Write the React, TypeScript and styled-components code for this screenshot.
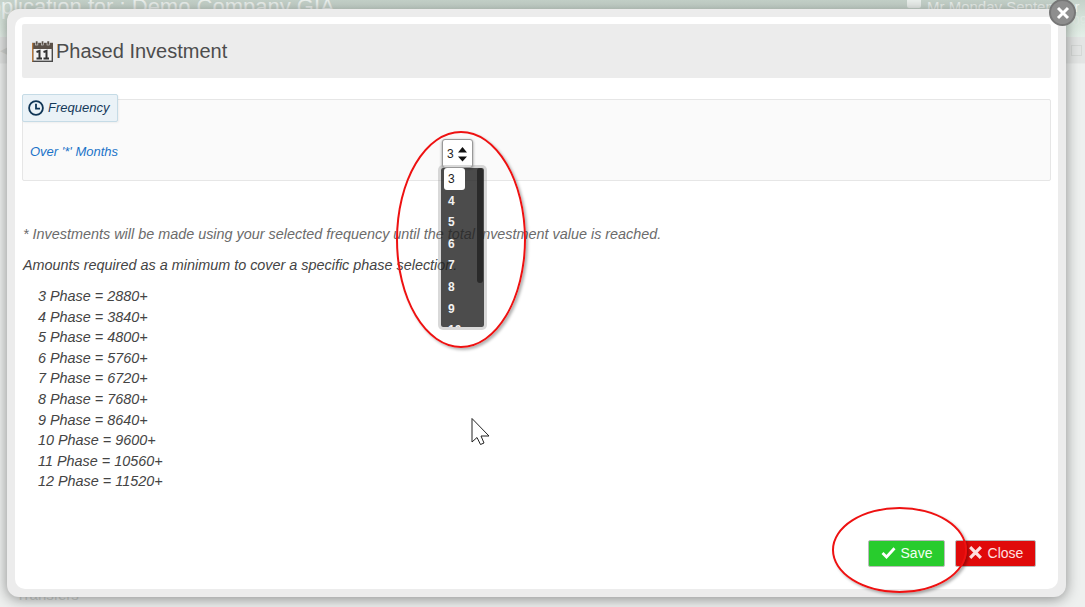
import React from 'react';
import styled, { createGlobalStyle } from 'styled-components';

const GlobalStyle = createGlobalStyle`
  html, body {
    margin: 0;
    padding: 0;
    height: 100%;
    overflow: hidden;
    background: #e9ebea;
    font-family: "Liberation Sans", Arial, sans-serif;
  }
`;

const Page = styled.div`
  position: relative;
  width: 1085px;
  height: 607px;
  overflow: hidden;
  background: #eef0ef;
`;

const PageHeader = styled.div`
  display: flex;
  justify-content: space-between;
  height: 37px;
  background: linear-gradient(180deg, #c5d2ca 0%, #dbe8df 70%, #e4efe8 100%);
  color: #edf2ef;
  overflow: hidden;
  white-space: nowrap;
`;

const PageTitle = styled.div`
  font-size: 22px;
  line-height: 14px;
  margin-left: -26px;
`;

const PageUser = styled.div`
  display: flex;
  flex-direction: column;
  width: 178px;
  flex: none;
  overflow: hidden;
`;

const UserLine = styled.div`
  display: flex;
  align-items: flex-start;
  gap: 6px;
  font-size: 15px;
  line-height: 14px;
`;

const UserDate = styled.div`
  align-self: flex-end;
  margin-right: -2px;
  color: #dfe8e2;
  font-size: 13px;
  line-height: 14px;
`;

const UserIcon = styled.div`
  width: 14px;
  height: 8px;
  flex: none;
  background: #edf2ef;
  border-radius: 0 0 2px 2px;
`;

const PageBar = styled.div`
  display: flex;
  align-items: center;
  justify-content: space-between;
  box-sizing: border-box;
  height: 27px;
  padding-right: 3px;
  background: #e3e5e4;
  border-bottom: 1px solid #e9ebea;
  color: #d2d5d3;
  font-size: 11px;
`;

const BarSquare = styled.div`
  width: 9px;
  height: 9px;
  border: 1px solid #d5d8d6;
`;

const PageFooter = styled.div`
  position: absolute;
  left: 16px;
  bottom: 4px;
  font-size: 15px;
  color: #cfd3d1;
`;

const Modal = styled.div`
  position: absolute;
  left: 7px;
  top: 9px;
  width: 1043px;
  height: 572px;
  padding: 8px;
  background: #ececec;
  border-radius: 12px;
  box-shadow: 0 2px 14px rgba(0, 0, 0, 0.42);
`;

const ModalBody = styled.div`
  display: flex;
  flex-direction: column;
  height: 100%;
  box-sizing: border-box;
  padding: 7px;
  background: #fff;
  border-radius: 10px;
`;

const CloseBadge = styled.button`
  position: absolute;
  right: -10px;
  top: -10px;
  display: flex;
  align-items: center;
  justify-content: center;
  width: 27px;
  height: 27px;
  padding: 0;
  border: 2px solid #777;
  border-radius: 50%;
  background: #8e8e8e;
`;

const HeaderBar = styled.div`
  display: flex;
  align-items: center;
  gap: 3px;
  height: 54px;
  flex: none;
  padding-left: 10px;
  background: #ececec;
  border-radius: 2px;
  color: #4d4d4d;
  font-size: 20px;
`;

const FrequencySet = styled.div`
  position: relative;
  box-sizing: border-box;
  height: 82px;
  margin-top: 21px;
  flex: none;
  display: flex;
  align-items: center;
  padding: 22px 7px 0;
  background: #fafafa;
  border: 1px solid #e6e6e6;
  border-radius: 2px;
`;

const Legend = styled.div`
  position: absolute;
  left: -1px;
  top: -6px;
  display: flex;
  align-items: center;
  gap: 4px;
  box-sizing: border-box;
  width: 96px;
  height: 28px;
  padding: 0 0 1px 5px;
  background: #eaf2f7;
  border: 1px solid #c5dbe6;
  border-radius: 2px;
  box-shadow: 1px 1px 2px rgba(0, 0, 0, 0.05);
  color: #14395a;
  font-size: 13px;
  font-style: italic;
`;

const OverLabel = styled.div`
  width: 412px;
  color: #1a73c8;
  font-size: 13px;
  font-style: italic;
`;

const SelectWrap = styled.div`
  position: relative;
  margin-top: 5px;
`;

const Spinner = styled.div`
  position: relative;
  z-index: 1;
  display: flex;
  align-items: center;
  gap: 3px;
  box-sizing: border-box;
  width: 31px;
  height: 29px;
  padding-left: 4px;
  background: #fff;
  border: 1px solid #999;
  border-radius: 3px;
  box-shadow: 0 1px 3px rgba(0, 0, 0, 0.45);
  color: #222;
  font-size: 12px;
`;

const Arrows = styled.svg`
  width: 11px;
  height: 20px;
`;

const OptionList = styled.div`
  position: absolute;
  left: -4px;
  top: 26px;
  z-index: 2;
  box-sizing: border-box;
  width: 49px;
  height: 165px;
  padding: 0 3px;
  overflow: hidden;
  background: rgba(34, 34, 34, 0.81);
  background-clip: padding-box;
  border: 3px solid rgba(150, 150, 150, 0.36);
  border-radius: 5px;
`;

const Option = styled.div<{ $selected?: boolean }>`
  box-sizing: border-box;
  width: 21px;
  height: 21.6px;
  padding-left: 4px;
  line-height: 23px;
  font-size: 12px;
  font-weight: ${(p) => (p.$selected ? 'normal' : 'bold')};
  color: ${(p) => (p.$selected ? '#222' : '#f2f2f2')};
  background: ${(p) => (p.$selected ? '#fff' : 'transparent')};
  border-radius: 3px;
`;

const ScrollThumb = styled.div`
  position: absolute;
  right: 1px;
  top: 0;
  width: 6px;
  height: 115px;
  background: #2a2a2a;
  border-radius: 3px;
`;

const Note = styled.p`
  margin: 45px 0 0 1px;
  color: #6b6b6b;
  font-size: 14.4px;
  font-style: italic;
  line-height: 16px;
`;

const Required = styled.p`
  margin: 15px 0 0 1px;
  color: #444;
  font-size: 14.4px;
  font-style: italic;
  line-height: 16px;
`;

const PhaseList = styled.div`
  margin: 13px 0 0 16px;
  color: #444;
  font-size: 14.4px;
  font-style: italic;
  line-height: 20.6px;
`;

const Footer = styled.div`
  display: flex;
  justify-content: flex-end;
  gap: 10px;
  margin-top: auto;
  padding: 0 15px 15px 0;
`;

const ActionButton = styled.button<{ $tone: 'save' | 'close' }>`
  display: flex;
  align-items: center;
  justify-content: center;
  gap: 5px;
  box-sizing: border-box;
  width: ${(p) => (p.$tone === 'save' ? '77px' : '81px')};
  height: 27px;
  padding: 0 0 2px;
  border: 1px solid #bbb;
  border-radius: 2px;
  background: ${(p) => (p.$tone === 'save' ? '#28cc2d' : '#e00a0a')};
  color: ${(p) => (p.$tone === 'save' ? '#f2fff2' : '#fde0e0')};
  font-family: "Liberation Sans", Arial, sans-serif;
  font-size: 14px;
`;

const Annotation = styled.div<{ $x: number; $y: number; $w: number; $h: number }>`
  position: absolute;
  left: ${(p) => p.$x}px;
  top: ${(p) => p.$y}px;
  box-sizing: border-box;
  width: ${(p) => p.$w}px;
  height: ${(p) => p.$h}px;
  border: 2px solid #ee1111;
  border-radius: 50%;
  box-shadow: 2px 2px 3px rgba(0, 0, 0, 0.3);
  pointer-events: none;
`;

const Cursor = styled.svg`
  position: absolute;
  left: 470px;
  top: 417px;
  width: 20px;
  height: 30px;
`;

const phases = [
  ['3', '2880'],
  ['4', '3840'],
  ['5', '4800'],
  ['6', '5760'],
  ['7', '6720'],
  ['8', '7680'],
  ['9', '8640'],
  ['10', '9600'],
  ['11', '10560'],
  ['12', '11520'],
];

const options = ['3', '4', '5', '6', '7', '8', '9', '10'];

const CalendarIcon = () => (
  <svg width="21" height="21" viewBox="0 0 21 21">
    <rect x="0.7" y="2.5" width="19.6" height="17.8" fill="#f4f4f4" stroke="#4a4a4a" strokeWidth="1.4" />
    <rect x="0" y="2" width="21" height="6" fill="#5a5048" />
    <rect x="0" y="2" width="1.2" height="18.6" fill="#b9783a" />
    <rect x="3.5" y="0" width="2.4" height="4" fill="#5a5048" stroke="#f4f4f4" strokeWidth="0.5" />
    <rect x="9.3" y="0" width="2.4" height="4" fill="#5a5048" stroke="#f4f4f4" strokeWidth="0.5" />
    <rect x="15" y="0" width="2.4" height="4" fill="#5a5048" stroke="#f4f4f4" strokeWidth="0.5" />
    <path d="M4.5 11 L7.5 10 V17.5 M4.5 17.5 H10 M11.5 11 L14.5 10 V17.5 M11.5 17.5 H17" stroke="#333" strokeWidth="2" fill="none" />
  </svg>
);

const ClockIcon = () => (
  <svg width="16" height="16" viewBox="0 0 16 16" fill="none" stroke="#0f3556" strokeWidth="1.8">
    <circle cx="8" cy="8" r="6.9" />
    <path d="M8 3.8 V8.6 H12" />
  </svg>
);

const CheckIcon = () => (
  <svg width="15" height="13" viewBox="0 0 15 13">
    <path d="M1.5 7 L5.5 11 L13.5 2.2" stroke="#fff" strokeWidth="2.8" fill="none" />
  </svg>
);

const CrossIcon = ({ size, color }: { size: number; color: string }) => (
  <svg width={size} height={size} viewBox="0 0 14 14">
    <path d="M2 2 L12 12 M12 2 L2 12" stroke={color} strokeWidth="3" fill="none" />
  </svg>
);

const App: React.FC = () => {
  return (
    <Page>
      <GlobalStyle />
      <PageHeader>
        <PageTitle>Application for : Demo Company GIA</PageTitle>
        <PageUser>
          <UserLine>
            <UserIcon />
            Mr Monday September
          </UserLine>
          <UserDate>09</UserDate>
        </PageUser>
      </PageHeader>
      <PageBar>
        <span>◀</span>
        <BarSquare />
      </PageBar>
      <PageFooter>Transfers</PageFooter>

      <Modal>
        <ModalBody>
          <HeaderBar>
            <CalendarIcon />
            Phased Investment
          </HeaderBar>

          <FrequencySet>
            <Legend>
              <ClockIcon />
              Frequency
            </Legend>
            <OverLabel>Over '*' Months</OverLabel>
            <SelectWrap>
              <Spinner>
                3
                <Arrows viewBox="0 0 11 20">
                  <path d="M5.5 3 L10 8.5 H1 Z M1 12.5 H10 L5.5 17.5 Z" fill="#111" />
                </Arrows>
              </Spinner>
              <OptionList>
                {options.map((o, i) => (
                  <Option key={o} $selected={i === 0}>
                    {o}
                  </Option>
                ))}
                <ScrollThumb />
              </OptionList>
            </SelectWrap>
          </FrequencySet>

          <Note>* Investments will be made using your selected frequency until the total investment value is reached.</Note>
          <Required>Amounts required as a minimum to cover a specific phase selection.</Required>
          <PhaseList>
            {phases.map(([n, amount]) => (
              <div key={n}>
                {n} Phase = {amount}+
              </div>
            ))}
          </PhaseList>

          <Footer>
            <ActionButton $tone="save">
              <CheckIcon />
              Save
            </ActionButton>
            <ActionButton $tone="close">
              <CrossIcon size={15} color="#fde0e0" />
              Close
            </ActionButton>
          </Footer>
        </ModalBody>
        <CloseBadge>
          <CrossIcon size={14} color="#fff" />
        </CloseBadge>
      </Modal>

      <Annotation $x={396} $y={131} $w={130} $h={217} />
      <Annotation $x={832} $y={507} $w={135} $h={86} />

      <Cursor viewBox="0 0 20 30">
        <path d="M2 1.5 V25 L7 20.5 L10.5 27.5 L14 26 L11 19 H19 Z" fill="#fff" stroke="#222" strokeWidth="1" />
      </Cursor>
    </Page>
  );
};

export default App;
